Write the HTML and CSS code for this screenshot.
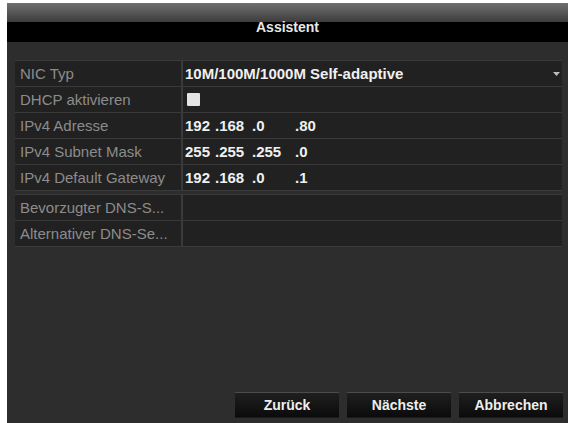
FILE: index.html
```html
<!DOCTYPE html>
<html lang="de">

<head>
  <meta charset="UTF-8">
  <title>Assistent</title>
  <link rel="stylesheet" href="styles.css">
</head>

<body>
  <div class="dialog">
    <div class="title-bar">Assistent</div>

    <div class="content">
      <div class="group">
        <div class="row">
          <div class="label">NIC Typ</div>
          <div class="value">
            10M/100M/1000M Self-adaptive
            <svg class="arrow" width="7" height="4" viewBox="0 0 7 4"><polygon points="0,0 7,0 3.5,4" fill="#bdbdbd" /></svg>
          </div>
        </div>
        <div class="row">
          <div class="label">DHCP aktivieren</div>
          <div class="value"><span class="checkbox"></span></div>
        </div>
        <div class="row">
          <div class="label">IPv4 Adresse</div>
          <div class="value">
            <span class="octet o1">192</span><span class="octet o2">.168</span><span class="octet o3">.0</span><span class="octet">.80</span>
          </div>
        </div>
        <div class="row">
          <div class="label">IPv4 Subnet Mask</div>
          <div class="value">
            <span class="octet o1">255</span><span class="octet o2">.255</span><span class="octet o3">.255</span><span class="octet">.0</span>
          </div>
        </div>
        <div class="row">
          <div class="label">IPv4 Default Gateway</div>
          <div class="value">
            <span class="octet o1">192</span><span class="octet o2">.168</span><span class="octet o3">.0</span><span class="octet">.1</span>
          </div>
        </div>
      </div>

      <div class="group">
        <div class="row">
          <div class="label">Bevorzugter DNS-S...</div>
          <div class="value"></div>
        </div>
        <div class="row">
          <div class="label">Alternativer DNS-Se...</div>
          <div class="value"></div>
        </div>
      </div>
    </div>

    <div class="buttons">
      <button class="btn">Zurück</button>
      <button class="btn">Nächste</button>
      <button class="btn">Abbrechen</button>
    </div>
  </div>
</body>

</html>
```

FILE: styles.css
```css
body {
  margin: 0;
  background-color: #ffffff;
  font-family: "Liberation Sans", Arial, sans-serif;
}

.dialog {
  margin: 3px 0 0 7px;
  height: 420px;
  background-color: #2d2d2d;
  display: flex;
  flex-direction: column;
}

.title-bar {
  height: 39px;
  box-sizing: border-box;
  padding-top: 16px;
  background: linear-gradient(#707070 0, #3c3c3c 19px, #000000 19px, #000000 39px);
  color: #e8e8e8;
  font-size: 14px;
  font-weight: bold;
  line-height: 16px;
  text-align: center;
}

.content {
  flex: 1;
  padding: 18px 6px 0 8px;
}

.group {
  border-top: 1px solid #3a3a3a;
  margin-bottom: 3px;
}

.row {
  display: flex;
  height: 25px;
  border-bottom: 1px solid #3a3a3a;
  background-color: #212121;
}

.label {
  width: 168px;
  box-sizing: border-box;
  padding-left: 5px;
  border-right: 2px solid #3a3a3a;
  color: #8c8c8c;
  font-size: 15px;
  line-height: 25px;
  white-space: nowrap;
  overflow: hidden;
}

.value {
  flex: 1;
  display: flex;
  align-items: center;
  padding-left: 2px;
  color: #f0f0f0;
  font-size: 15px;
  font-weight: bold;
  white-space: nowrap;
}

.arrow {
  margin-left: auto;
  margin-right: 2px;
}

.checkbox {
  display: inline-block;
  width: 13px;
  height: 13px;
  margin-left: 2px;
  background-color: #e4e4e4;
  border-radius: 1px;
}

.octet {
  display: inline-block;
}

.o1 {
  width: 30px;
}

.o2 {
  width: 37px;
}

.o3 {
  width: 43px;
}

.buttons {
  display: flex;
  justify-content: flex-end;
  gap: 8px;
  padding: 0 5px 6px 0;
}

.btn {
  width: 104px;
  height: 25px;
  padding: 0;
  border: none;
  border-top: 1px solid #4c4c4c;
  background: linear-gradient(#1f1f1f, #0b0b0b);
  box-shadow: 0 1px 0 #1a1a1a;
  color: #eeeeee;
  font-family: "Liberation Sans", Arial, sans-serif;
  font-size: 14px;
  font-weight: bold;
}
```
